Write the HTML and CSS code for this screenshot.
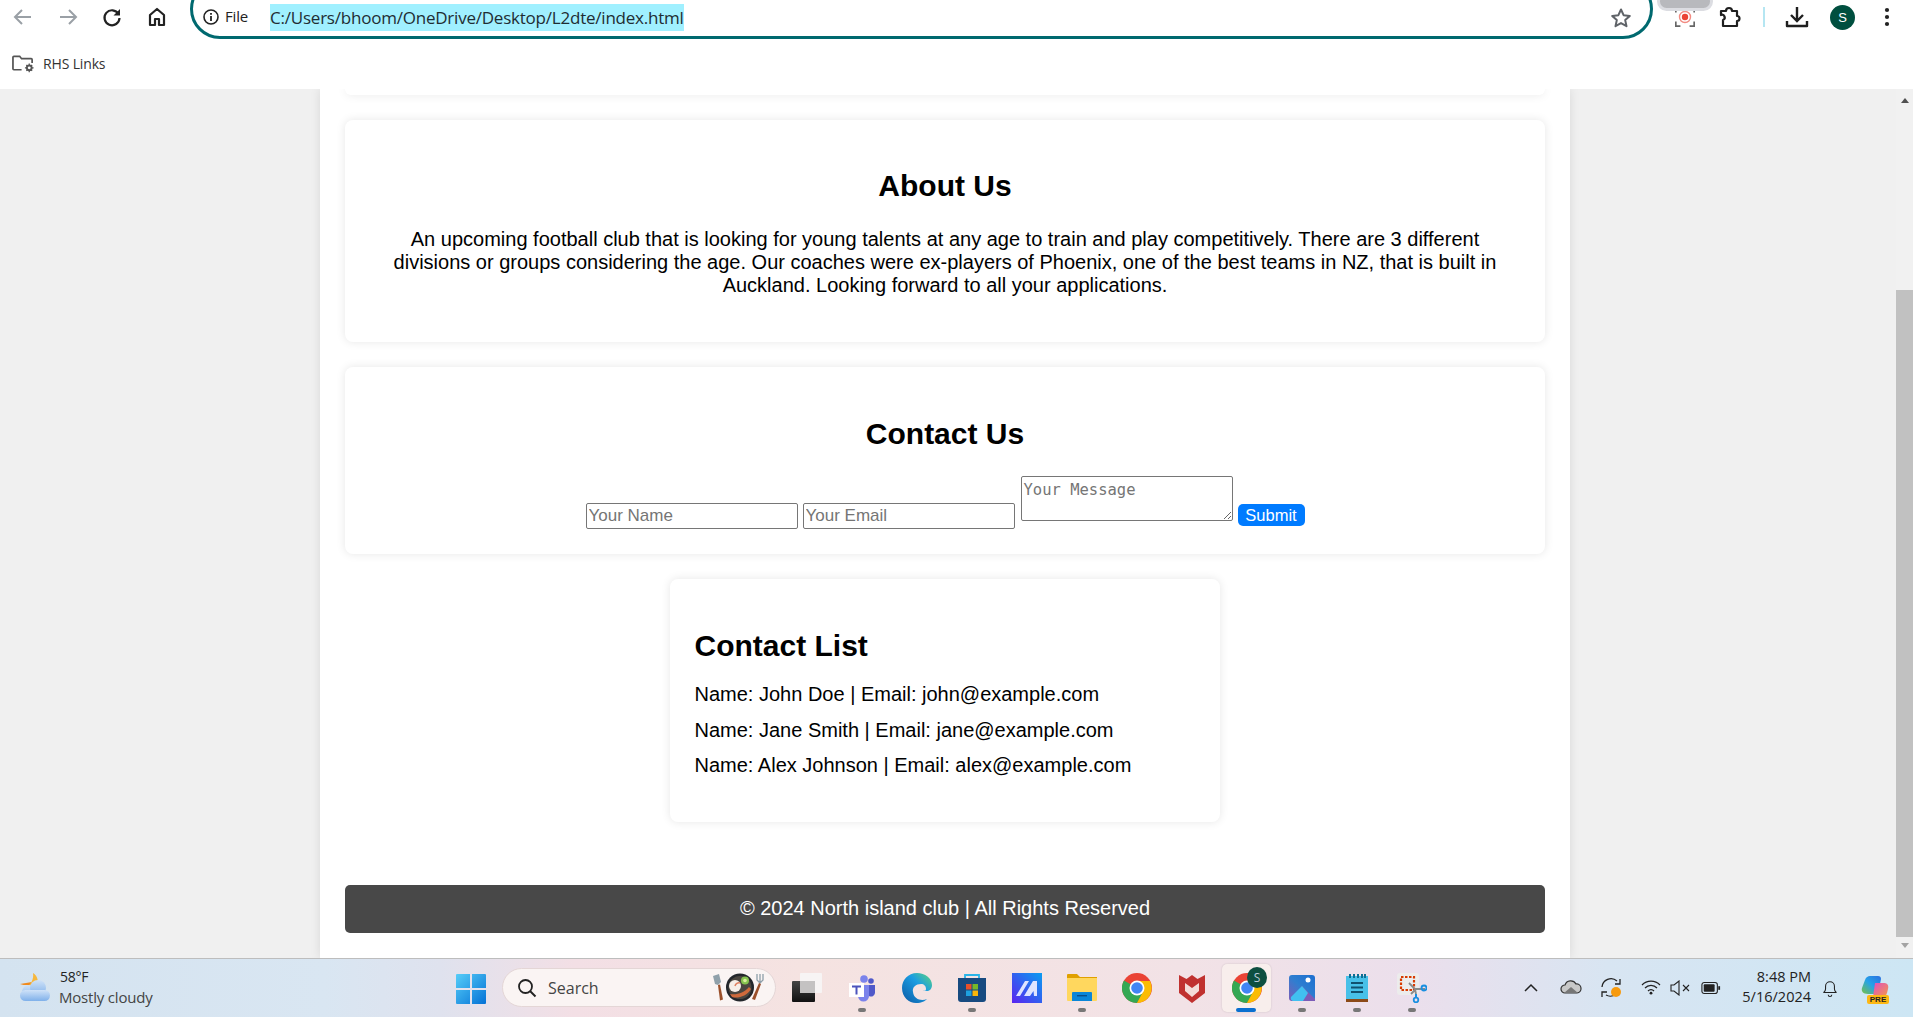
FILE: index.html
```html
<!DOCTYPE html>
<html lang="en">
<head>
<meta charset="utf-8">
<title>North island club</title>
<link rel="stylesheet" href="styles.css">
</head>
<body>
<div class="screen">
  <header class="chrome">
    <div class="toolbar">
      <div class="nav">
        <svg class="ic" viewBox="0 0 24 24"><path d="M20 12H5M11 5l-7 7 7 7" fill="none" stroke="#9aa0a6" stroke-width="2"/></svg>
        <svg class="ic" viewBox="0 0 24 24"><path d="M4 12h15M13 5l7 7-7 7" fill="none" stroke="#9aa0a6" stroke-width="2"/></svg>
        <svg class="ic" viewBox="0 0 24 24"><path d="M18.5 9A7.5 7.5 0 1 0 19.500 13" fill="none" stroke="#222" stroke-width="2.200"/><path d="M20 4v6.500h-6.500z" fill="#222"/></svg>
        <svg class="ic" viewBox="0 0 24 24"><path d="M5 20V10l7-6 7 6v10h-5v-6h-4v6z" fill="none" stroke="#222" stroke-width="2.200" stroke-linejoin="round"/></svg>
      </div>
      <div class="omnibox">
        <svg class="ic-info" viewBox="0 0 18 18"><circle cx="9" cy="9" r="7" fill="none" stroke="#222" stroke-width="1.600"/><path d="M9 8v5M9 5v1.800" stroke="#222" stroke-width="1.800"/></svg>
        <span class="file">File</span>
        <span class="url">C:/Users/bhoom/OneDrive/Desktop/L2dte/index.html</span>
        <svg class="ic-star" viewBox="0 0 24 24"><path d="M12 3.500l2.600 5.700 6.200.7-4.600 4.200 1.300 6.100-5.500-3.100-5.500 3.100 1.300-6.100-4.600-4.200 6.200-.7z" fill="none" stroke="#5f6368" stroke-width="2" stroke-linejoin="round"/></svg>
      </div>
      <div class="actions">
        <div class="pill"></div>
        <svg class="ic act-capture" viewBox="0 0 24 24"><path d="M2 7V2h5M17 2h5v5M22 17v5h-5M7 22H2v-5" fill="none" stroke="#666" stroke-width="1.800"/><circle cx="12" cy="12" r="6" fill="none" stroke="#f28b82" stroke-width="1.500"/><circle cx="12" cy="12" r="3.500" fill="#ea4335"/></svg>
        <svg class="ic act-puzzle" viewBox="0 0 24 24"><path d="M4 6h5a3 3 0 0 1 6 0h5v5a2.500 2.500 0 0 1 0 5v5H6v-6a2.500 2.500 0 0 0-2-5z" fill="none" stroke="#1f1f1f" stroke-width="2.200" stroke-linejoin="round"/></svg>
        <span class="divider"></span>
        <svg class="ic act-dl" viewBox="0 0 24 24"><path d="M12 2v13M6 10l6 6 6-6" fill="none" stroke="#1f1f1f" stroke-width="2.400"/><path d="M2 16v5h20v-5" fill="none" stroke="#1f1f1f" stroke-width="2.400" stroke-linejoin="round"/></svg>
        <span class="avatar">S</span>
        <svg class="ic act-menu" viewBox="0 0 24 24"><circle cx="12" cy="5" r="2.100" fill="#222"/><circle cx="12" cy="12" r="2.100" fill="#222"/><circle cx="12" cy="19" r="2.100" fill="#222"/></svg>
      </div>
    </div>
    <div class="bookmarks">
      <svg class="ic-folder" viewBox="0 0 24 18"><path d="M10 15H2a1 1 0 0 1-1-1V2a1 1 0 0 1 1-1h6l2 2.500h10a1 1 0 0 1 1 1V8" fill="none" stroke="#555" stroke-width="1.800"/><circle cx="18" cy="13" r="2.500" fill="none" stroke="#555" stroke-width="2"/><path d="M18 8.500v2M18 15.500v2M13.500 13h2M20.500 13h2M15 10l1.300 1.300M19.700 14.700L21 16M15 16l1.300-1.300M19.700 11.300L21 10" stroke="#555" stroke-width="1.300"/></svg>
      <span>RHS Links</span>
    </div>
  </header>

  <div class="viewport">
    <div class="gutter left"></div>
    <main class="page">
      <div class="card card-cut"></div>
      <section class="card about">
        <h2>About Us</h2>
        <p>An upcoming football club that is looking for young talents at any age to train and play competitively. There are 3 different divisions or groups considering the age. Our coaches were ex-players of Phoenix, one of the best teams in NZ, that is built in Auckland. Looking forward to all your applications.</p>
      </section>
      <section class="card contact">
        <h2>Contact Us</h2>
        <form class="form">
          <input class="field" type="text" placeholder="Your Name">
          <input class="field field-last" type="email" placeholder="Your Email">
          <textarea class="message" placeholder="Your Message"></textarea>
          <button class="submit" type="button">Submit</button>
        </form>
      </section>
      <section class="card list">
        <h2>Contact List</h2>
        <ul>
          <li>Name: John Doe | Email: john@example.com</li>
          <li>Name: Jane Smith | Email: jane@example.com</li>
          <li>Name: Alex Johnson | Email: alex@example.com</li>
        </ul>
      </section>
      <footer class="foot">© 2024 North island club | All Rights Reserved</footer>
    </main>
    <div class="gutter right">
      <div class="scrollbar">
        <span class="arrow up"></span>
        <span class="thumb"></span>
        <span class="arrow down"></span>
      </div>
    </div>
  </div>

  <footer class="taskbar">
    <div class="weather">
      <svg class="tb-weather" viewBox="0 0 30 28"><defs><linearGradient id="cl" x1="0" y1="0" x2="0" y2="1"><stop offset="0" stop-color="#cfe2f8"/><stop offset="1" stop-color="#7fb0ea"/></linearGradient></defs><path d="M0 11c5 2 9 0 10 2l2-4z" fill="#f08a1d"/><path d="M13 0c5 3 6 9 3 14H6C11 12 14 6 13 0z" fill="#f6b73c"/><circle cx="9" cy="19" r="7" fill="url(#cl)"/><circle cx="18" cy="15" r="8" fill="url(#cl)"/><rect x="0" y="17" width="30" height="11" rx="5.500" fill="url(#cl)"/></svg>
      <div class="weather-text"><span>58°F</span><span class="dim">Mostly cloudy</span></div>
    </div>
    <div class="center">
      <svg class="start" viewBox="0 0 30 30"><defs><linearGradient id="w" x1="0" y1="0" x2="1" y2="1"><stop offset="0" stop-color="#56cdf8"/><stop offset="1" stop-color="#0472d6"/></linearGradient></defs><path d="M0 1a1 1 0 0 1 1-1h13v14H0zM16 0h13a1 1 0 0 1 1 1v13H16zM0 16h14v14H1a1 1 0 0 1-1-1zM16 16h14v13a1 1 0 0 1-1 1H16z" fill="url(#w)"/></svg>
      <div class="search">
        <svg class="search-ic" viewBox="0 0 20 20"><circle cx="8.500" cy="8.500" r="6.500" fill="none" stroke="#222" stroke-width="1.800"/><path d="M13 13l5.500 5.500" stroke="#222" stroke-width="2"/></svg>
        <span>Search</span>
        <svg class="food" viewBox="0 0 51 29"><path d="M0 3l6-2 2 8-2 2-1 1-3-1z" fill="#8fa0aa"/><path d="M5 12l2-.5 3 15-3 1z" fill="#9a4f2a"/><circle cx="27" cy="14.500" r="14" fill="#23262b"/><circle cx="27" cy="14.500" r="11.500" fill="#4a4640"/><circle cx="22" cy="13" r="6" fill="#f6eee8"/><path d="M22 13a4 4 0 0 1 5-3" fill="none" stroke="#e08060" stroke-width="1.500"/><circle cx="32" cy="7.500" r="4" fill="#86c54f"/><circle cx="32" cy="7.500" r="1.800" fill="#d9ef9f"/><path d="M17 21c7 1 14-1 19-7l2 2c-4 7-13 10-19 8z" fill="#cf6a3c"/><path d="M44 1v6l3 3 3-3V1M47 1v9" fill="none" stroke="#8fa0aa" stroke-width="1.300"/><path d="M46 10l2 1-6 16-3-1z" fill="#9a4f2a"/></svg>
      </div>
      <div class="apps">
        <div class="app">
          <svg viewBox="0 0 30 30"><defs><linearGradient id="tv" x1="0" y1="0" x2="0" y2="1"><stop offset="0" stop-color="#444"/><stop offset="1" stop-color="#111"/></linearGradient></defs><rect x="0" y="8" width="23" height="21" rx="1" fill="url(#tv)"/><rect x="8" y="0" width="22" height="20" rx="1" fill="#f7f4f4"/><rect x="8" y="8" width="15" height="12" fill="#c4c2c2"/></svg>
        </div>
        <div class="app on-dot">
          <svg viewBox="0 0 30 30"><circle cx="17" cy="6" r="3.800" fill="#7b83eb"/><circle cx="24" cy="8" r="2.800" fill="#5059c9"/><path d="M11 12h11v11a5.500 5.500 0 0 1-11 0z" fill="#7b83eb"/><path d="M22 12h6v8a4 4 0 0 1-6 3z" fill="#5059c9"/><rect x="2" y="10" width="15" height="14" fill="#fff"/><path d="M5 12.500h9v2h-3.500v7h-2v-7H5z" fill="#4b53bc"/></svg>
        </div>
        <div class="app">
          <svg viewBox="0 0 30 30"><defs><linearGradient id="e" x1="0" y1="1" x2="1" y2="0"><stop offset="0" stop-color="#0c59a4"/><stop offset=".6" stop-color="#1b9de2"/><stop offset="1" stop-color="#5fd67a"/></linearGradient></defs><path d="M15 0C6 0 0 7 0 15c0 9 7 15 14 15 6 0 9-2 11-4-5 2-13 1-14-7-1-5 3-8 8-8 3 0 5 2 5 5 0 2-2 2-3 1 6 3 9-1 9-5C30 5 23 0 15 0z" fill="url(#e)"/></svg>
        </div>
        <div class="app on-dot">
          <svg viewBox="0 0 30 30"><path d="M8 7V2h14v5" fill="none" stroke="#2ab4e8" stroke-width="1.800"/><path d="M1 5h28v21a3 3 0 0 1-3 3H4a3 3 0 0 1-3-3z" fill="#174a80"/><rect x="9" y="11" width="5.500" height="5.500" fill="#e8502a"/><rect x="15.500" y="11" width="5.500" height="5.500" fill="#76b82a"/><rect x="9" y="17.500" width="5.500" height="5.500" fill="#1ea0e0"/><rect x="15.500" y="17.500" width="5.500" height="5.500" fill="#fab70a"/></svg>
        </div>
        <div class="app">
          <svg viewBox="0 0 30 30"><defs><linearGradient id="m" x1="0" y1="1" x2="1" y2="0"><stop offset="0" stop-color="#5a24f0"/><stop offset="1" stop-color="#0a9cf0"/></linearGradient></defs><rect width="30" height="30" fill="url(#m)"/><path d="M4 23L13 8h4L8 23zM12 23L21 8h4v15h-3l-.5-5-3.500 5z" fill="#dfe4ff"/></svg>
        </div>
        <div class="app on-dot">
          <svg viewBox="0 0 30 30"><path d="M0 2a1 1 0 0 1 1-1h9l3 3h17v3H0z" fill="#e0a000"/><path d="M0 5h30v22a1 1 0 0 1-1 1H1a1 1 0 0 1-1-1z" fill="#ffd75e"/><path d="M5 20a1 1 0 0 1 1-1h18a1 1 0 0 1 1 1v8H5z" fill="#0a86d8"/><rect x="10" y="22" width="10" height="1.400" fill="#084e8a"/></svg>
        </div>
        <div class="app">
          <svg viewBox="0 0 30 30"><circle cx="15" cy="15" r="15" fill="#ea4335"/><path d="M15 15L2 7.500A15 15 0 0 0 15 30l7.500-13z" fill="#34a853"/><path d="M15 8h13a15 15 0 0 1-13 22l7-13z" fill="#fbbc04"/><circle cx="15" cy="15" r="7.500" fill="#fff"/><circle cx="15" cy="15" r="5.800" fill="#4285f4"/></svg>
        </div>
        <div class="app">
          <svg viewBox="0 0 30 30"><path d="M2 2l7.500 4L15 2l5.500 4L28 2v18L15 30 2 20z" fill="#c0312f"/><path d="M8 10l7 5 7-5v8l-7 6-7-6z" fill="#f3dcd8"/></svg>
        </div>
        <div class="app active">
          <svg viewBox="0 0 30 30"><circle cx="15" cy="15" r="15" fill="#ea4335"/><path d="M15 15L2 7.500A15 15 0 0 0 15 30l7.500-13z" fill="#34a853"/><path d="M15 8h13a15 15 0 0 1-13 22l7-13z" fill="#fbbc04"/><circle cx="15" cy="15" r="7.500" fill="#fff"/><circle cx="15" cy="15" r="5.800" fill="#4285f4"/></svg>
          <span class="badge">S</span>
        </div>
        <div class="app on-dot">
          <svg viewBox="0 0 30 30"><defs><linearGradient id="p" x1="0" y1="1" x2="1" y2="0"><stop offset="0" stop-color="#7c5cb8"/><stop offset=".5" stop-color="#2f7ed0"/><stop offset="1" stop-color="#1c6fd0"/></linearGradient></defs><rect x="2" y="2" width="26" height="26" rx="3" fill="url(#p)"/><path d="M4 28l11-15 13 13v2z" fill="#7c5cb8"/><path d="M6 28a3 3 0 0 1-2-4l11-11 6 7-5 8z" fill="#41c0f0"/><circle cx="21" cy="7" r="2.500" fill="#fff"/></svg>
        </div>
        <div class="app on-dot">
          <svg viewBox="0 0 30 30"><rect x="4" y="3" width="22" height="24" fill="#48c0e8"/><path d="M9 10h12M9 14.500h12M9 19h12" stroke="#11506e" stroke-width="1.800"/><path d="M8 1v4M12 1v4M16 1v4M20 1v4M23 1v4" stroke="#0d6f94" stroke-width="2"/><rect x="4" y="26" width="22" height="3" fill="#8c4a18"/></svg>
        </div>
        <div class="app on-dot">
          <svg viewBox="0 0 30 30"><rect x="0" y="0" width="22" height="22" rx="3" fill="#ececec"/><rect x="4" y="4" width="13" height="13" fill="none" stroke="#d83b01" stroke-width="2.200" stroke-dasharray="2.500 1.500"/><path d="M12 10l6 6 1 5M14 21l5-5h9" fill="none" stroke="#8a8a8a" stroke-width="1.800"/><circle cx="27" cy="15" r="2.500" fill="none" stroke="#1a8fe0" stroke-width="1.800"/><path d="M19 21v4" stroke="#1a8fe0" stroke-width="2"/><circle cx="19" cy="27" r="2.300" fill="none" stroke="#1a8fe0" stroke-width="1.800"/></svg>
        </div>
      </div>
    </div>
    <div class="tray">
      <svg class="t-chev" viewBox="0 0 16 16"><path d="M2 11l6-6 6 6" fill="none" stroke="#222" stroke-width="1.500"/></svg>
      <svg class="t-cloud" viewBox="0 0 22 16"><path d="M5 14a4 4 0 0 1 0-8 6 6 0 0 1 11-1 4.500 4.500 0 0 1 1 9z" fill="#c8c8c8" stroke="#333" stroke-width="1.200"/><path d="M4 14l7-6 7 6z" fill="#777"/></svg>
      <svg class="t-sync" viewBox="0 0 24 24"><path d="M3 11a9 9 0 0 1 15-6M21 3v5h-5M18 17a9 9 0 0 1-11 2M3 21v-5h5" fill="none" stroke="#222" stroke-width="1.300"/><circle cx="17" cy="16" r="5" fill="#f79a0e"/></svg>
      <svg class="t-wifi" viewBox="0 0 20 16"><path d="M1 6a12.500 12.500 0 0 1 18 0M4 9a8 8 0 0 1 12 0M7 12a4 4 0 0 1 6 0" fill="none" stroke="#222" stroke-width="1.200"/><circle cx="10" cy="14.200" r="1.400" fill="#222"/></svg>
      <svg class="t-vol" viewBox="0 0 20 16"><path d="M1 5h3l5-4v14l-5-4H1z" fill="none" stroke="#222" stroke-width="1.100"/><path d="M13 5l6 6M19 5l-6 6" stroke="#222" stroke-width="1.100"/></svg>
      <svg class="t-bat" viewBox="0 0 22 14"><rect x="1" y="1" width="17" height="12" rx="2.500" fill="none" stroke="#222" stroke-width="1.200"/><rect x="3" y="3" width="12" height="8" rx="1" fill="#222"/><rect x="19" y="5" width="2" height="4" fill="#222"/></svg>
      <div class="clock"><span>8:48 PM</span><span>5/16/2024</span></div>
      <svg class="t-bell" viewBox="0 0 18 20"><path d="M2 15c1-1 2-2 2-4V8a5 5 0 0 1 10 0v3c0 2 1 3 2 4z" fill="none" stroke="#222" stroke-width="1.200" stroke-linejoin="round"/><path d="M7 17.500a2 2 0 0 0 4 0" fill="none" stroke="#222" stroke-width="1.200"/></svg>
      <div class="copilot">
        <svg viewBox="0 0 28 24"><defs><linearGradient id="c" x1="0" y1="1" x2="1" y2="0"><stop offset="0" stop-color="#7ac143"/><stop offset=".5" stop-color="#26a3e8"/><stop offset="1" stop-color="#2b6fe0"/></linearGradient><linearGradient id="c2" x1="0" y1="0" x2="1" y2="1"><stop offset="0" stop-color="#e24fc0"/><stop offset="1" stop-color="#f29a4a"/></linearGradient></defs><path d="M9 1h8c2 0 3 1 3 3l-3 15H7c-5 0-7-3-6-6l3-8c1-3 3-4 5-4z" fill="url(#c)"/><path d="M14 8h9c3 0 5 2 4 6l-1 4c-1 3-3 4-5 4h-9z" fill="url(#c2)"/></svg>
        <span class="pre">PRE</span>
      </div>
    </div>
  </footer>
</div>
</body>
</html>
```

FILE: styles.css
```css
* { box-sizing: border-box; }
html, body { margin: 0; height: 100%; overflow: hidden; }
body { font-family: "Liberation Sans", Arial, sans-serif; color: #000; }
.screen { width: 1913px; height: 1017px; display: flex; flex-direction: column; overflow: hidden; }

/* browser chrome */
.chrome { height: 89px; background: #fff; flex: none; font-family: "Open Sans", sans-serif; }
.toolbar { height: 45px; display: flex; align-items: flex-start; }
.nav { width: 190px; padding: 5px 0 0 11px; display: flex; gap: 20.500px; flex: none; }
.ic { width: 24px; height: 24px; display: block; flex: none; }
.omnibox { width: 1463px; height: 60px; margin-top: -21px; border: 3px solid #00696f; border-radius: 30px; padding: 22px 17px 0 9px; display: flex; align-items: flex-start; flex: none; }
.ic-info { width: 18px; height: 18px; margin-top: 4px; flex: none; }
.file { font-size: 15px; margin-left: 5px; line-height: 24px; width: 45px; color: #222; letter-spacing: -.2px; flex: none; }
.url { background: #a0f0ff; height: 27px; line-height: 27px; font-size: 17px; width: 414px; white-space: nowrap; color: #1f2d33; letter-spacing: -.22px; flex: none; }
.ic-star { width: 24px; height: 24px; margin-left: auto; margin-top: 2px; }
.actions { position: relative; flex: 1; display: flex; padding-top: 5px; }
.pill { position: absolute; left: 4px; top: -8px; width: 56px; height: 19px; background: #b8b9bd; border: 3px solid #dcdde2; border-radius: 12px; }
.act-capture { margin-left: 21px; width: 22px; height: 22px; margin-top: 1px; }
.act-puzzle { margin-left: 21px; }
.divider { width: 2px; height: 20px; background: #b5e6f2; margin: 2px 0 0 22px; }
.act-dl { margin-left: 20px; }
.avatar { width: 25px; height: 25px; border-radius: 50%; background: #004f3f; color: #fff; font-size: 13px; line-height: 25px; text-align: center; margin-left: 21px; font-family: "Liberation Sans", sans-serif; }
.act-menu { margin-left: 20px; }
.bookmarks { height: 44px; display: flex; align-items: center; padding: 0 0 7px 12px; gap: 8px; font-size: 14px; color: #333; letter-spacing: -.15px; }
.ic-folder { width: 23px; height: 18px; flex: none; }

/* page viewport */
.viewport { flex: 1; min-height: 0; display: flex; background: #f0f0f0; overflow: hidden; }
.gutter.left { width: 320px; flex: none; }
.gutter.right { flex: 1; position: relative; }
.page { width: 1250px; flex: none; background: #fff; box-shadow: 0 0 10px rgba(0,0,0,.1); padding: 0 25px; display: flex; flex-direction: column; align-items: stretch; }
.card { background: #fff; border-radius: 8px; box-shadow: 0 0 10px rgba(0,0,0,.1); text-align: center; flex: none; }
.card-cut { height: 6px; border-radius: 0 0 8px 8px; margin-bottom: 25px; }
h2 { font-size: 30px; font-weight: 700; margin: 0; line-height: 34px; }
.about { height: 222px; padding: 49px 40px 0; margin-bottom: 25px; }
.about p { margin: 25px 0 0; font-size: 20px; line-height: 23px; }
.contact { height: 187px; padding: 50px 20px 0; margin-bottom: 25px; }
.form { display: block; margin-top: 25px; font-size: 0; }
.field { width: 212px; height: 26px; font: 17px "Liberation Sans", sans-serif; padding: 1px 2px; border: 1px solid #767676; border-radius: 2px; margin-right: 5px; vertical-align: baseline; }
.field-last { margin-right: 6px; }
.field::placeholder { color: #757575; }
.message { width: 212px; height: 45px; font: 15.500px "DejaVu Sans Mono", monospace; padding: 4px 2px 1px; border: 1px solid #767676; border-radius: 2px; margin-right: 5px; vertical-align: baseline; }
.message::placeholder { color: #757575; }
.submit { width: 67px; height: 22px; padding: 0; font: 16.500px/22px "Liberation Sans", sans-serif; color: #fff; background: #007bff; border: 0; border-radius: 5px; vertical-align: baseline; }
.list { width: 550px; height: 243px; align-self: center; text-align: left; padding: 50px 25px 0 24.500px; margin-bottom: 63px; }
.list ul { list-style: none; margin: 20px 0 0; padding: 0; }
.list li { font-size: 20px; line-height: 23px; margin-bottom: 12.500px; }
.foot { height: 48px; background: #484848; color: #fff; border-radius: 5px; text-align: center; font-size: 20px; line-height: 46px; flex: none; }

/* scrollbar */
.scrollbar { position: absolute; right: 0; top: 0; bottom: 0; width: 17px; background: #f1f1f1; display: flex; flex-direction: column; align-items: center; padding-top: 9px; }
.arrow { width: 0; height: 0; border-left: 4.500px solid transparent; border-right: 4.500px solid transparent; flex: none; }
.arrow.up { border-bottom: 5px solid #505050; }
.arrow.down { border-top: 5px solid #a3a3a3; margin-top: 6px; }
.thumb { width: 17px; height: 647px; background: #c1c1c1; margin-top: 187px; flex: none; }

/* taskbar */
.taskbar { height: 59px; flex: none; display: flex; position: relative; border-top: 1px solid #bdbdbd; background: linear-gradient(90deg, #d4e3f0 0%, #d9e6f2 17%, #dfe2ee 23%, #f3dfe5 30%, #f5e3e1 42%, #f2e2e6 62%, #ebdfec 74%, #d8e5f2 84%, #cde6f4 100%); font-family: "Open Sans", sans-serif; color: #222; }
.weather { display: flex; width: 456px; padding: 8px 0 0 20px; gap: 9px; flex: none; }
.tb-weather { width: 30px; height: 28px; flex: none; margin-top: 6px; }
.weather-text { display: flex; flex-direction: column; font-size: 14px; line-height: 20px; letter-spacing: -.25px; padding-left: 1px; }
.weather-text .dim { color: #444; font-size: 15px; letter-spacing: -.2px; margin-left: -1px; }
.center { display: flex; align-items: flex-start; flex: none; }
.start { width: 30px; height: 30px; margin-top: 15px; flex: none; }
.search { width: 274px; height: 39px; margin: 9px 0 0 16px; background: #faf4f3; border: 1px solid #e4d6d6; border-radius: 20px; display: flex; align-items: center; padding: 0 11px 0 14px; font-size: 16px; color: #444; flex: none; }
.search-ic { width: 20px; height: 20px; margin-right: 11px; flex: none; }
.food { width: 51px; height: 29px; margin-left: auto; flex: none; }
.apps { display: flex; margin-left: 3px; flex: none; }
.app { width: 55px; height: 58px; position: relative; flex: none; display: flex; justify-content: center; padding-top: 14px; }
.app svg { width: 30px; height: 30px; display: block; }
.app.on-dot::after { content: ""; position: absolute; left: 24px; bottom: 5px; width: 8px; height: 4px; border-radius: 2px; background: #777; }
.app.active::before { content: ""; position: absolute; left: 3px; right: 3px; top: 5px; bottom: 5px; background: #f8eeec; border-radius: 5px; box-shadow: 0 0 2px rgba(0,0,0,.15); }
.app.active svg { position: relative; }
.app.active::after { content: ""; position: absolute; left: 17px; bottom: 5px; width: 20px; height: 4px; border-radius: 2px; background: #0a6fd0; }
.badge { position: absolute; left: 28px; top: 8px; width: 20px; height: 21px; border-radius: 50%; background: #0d4f40; color: #bcd; font-size: 12px; line-height: 21px; text-align: center; }
.tray { position: absolute; right: 0; top: 0; bottom: 0; width: 400px; }
.tray svg { position: absolute; }
.t-chev { left: 10px; top: 21px; width: 16px; height: 16px; }
.t-cloud { left: 47px; top: 20px; width: 22px; height: 16px; }
.t-sync { left: 86px; top: 17px; width: 24px; height: 24px; }
.t-wifi { left: 128px; top: 20px; width: 20px; height: 16px; }
.t-vol { left: 157px; top: 21px; width: 20px; height: 16px; }
.t-bat { left: 188px; top: 22px; width: 20px; height: 14px; }
.clock { position: absolute; left: 216px; top: 8px; width: 82px; display: flex; flex-direction: column; align-items: flex-end; font-size: 14.500px; line-height: 20px; }
.t-bell { left: 309px; top: 19px; width: 16px; height: 20px; }
.copilot { position: absolute; left: 348px; top: 16px; width: 28px; height: 32px; }
.copilot svg { position: static; width: 28px; height: 24px; display: block; }
.pre { position: absolute; left: 6px; top: 20px; width: 22px; height: 9px; background: #fdb813; border-radius: 2px; font: 700 8px/9px "Liberation Sans", sans-serif; text-align: center; color: #222; }
```
